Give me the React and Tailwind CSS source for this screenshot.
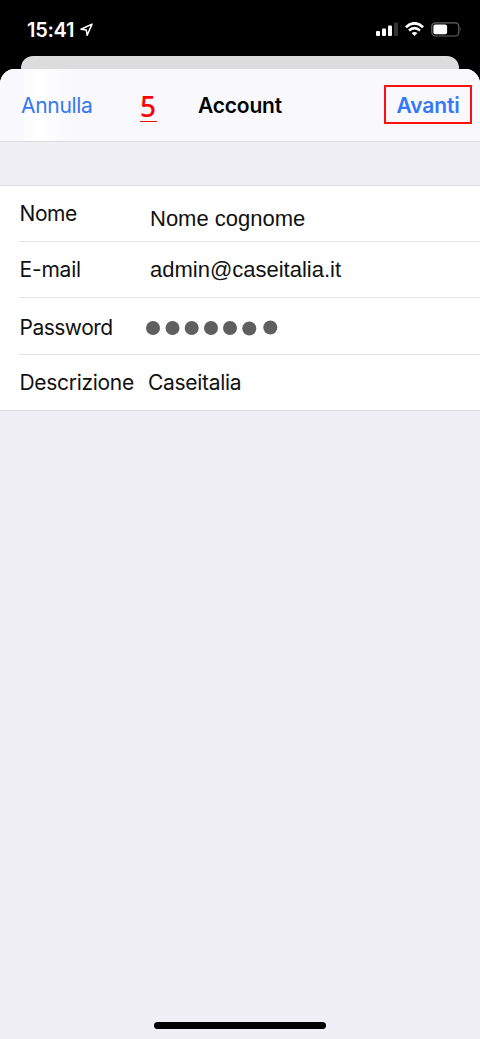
import React from "react";

const dots = [
  { x: 7, y: 8 },
  { x: 26.5, y: 8 },
  { x: 45.7, y: 8 },
  { x: 65, y: 8 },
  { x: 84, y: 8 },
  { x: 103.3, y: 8.5 },
  { x: 124.3, y: 7.5 },
];

function StatusBar() {
  return (
    <div className="flex h-14 items-start justify-between pl-[27px] pr-[18px] text-white">
      <div className="flex items-center pt-[15px]">
        <span className="w-[50px] text-[20px] font-semibold leading-[30px] tracking-[-0.3px] whitespace-nowrap">15:41</span>
        <svg className="ml-[2px] h-[15px] w-[15px]" viewBox="0 0 15 15" fill="none" stroke="currentColor" strokeWidth="1.5" strokeLinejoin="round">
          <path d="M13 1.1 L2 6.3 L7.3 7.1 L8.2 12.3 Z" />
        </svg>
      </div>
      <div className="flex items-start pt-[22px]">
        <svg className="h-[15px] w-[22px]" viewBox="0 0 22 15" fill="currentColor">
          <rect x="0" y="9" width="4" height="5" rx="1" />
          <rect x="6" y="6.5" width="4" height="7.5" rx="1" />
          <rect x="12" y="3.5" width="4" height="10.5" rx="1" />
          <rect x="18" y="0.5" width="4" height="13.5" rx="1" fill="#343434" />
        </svg>
        <svg className="ml-[7px] h-[15px] w-[19px]" viewBox="0 0 19 15" fill="none" stroke="currentColor">
          <path d="M0.9 5.2 Q9.5 -2.6 18.1 5.2" strokeWidth="2.7" />
          <path d="M4 8.5 Q9.5 3.7 15 8.5" strokeWidth="2.5" />
          <path d="M9.5 14 L6.6 11.1 Q9.5 8.7 12.4 11.1 Z" fill="currentColor" stroke="none" />
        </svg>
        <svg className="ml-[7px] h-[15px] w-[31px]" viewBox="0 0 31 15">
          <rect x="0.8" y="0.8" width="27" height="13.2" rx="3.6" fill="none" stroke="#666" strokeWidth="1.2" />
          <rect x="2.4" y="2.6" width="13.7" height="9.6" rx="2" fill="#fff" />
          <path d="M29.2 5.2 Q31 7.4 29.2 9.6 Z" fill="#666" />
        </svg>
      </div>
    </div>
  );
}

function NavBar() {
  return (
    <div className="grid h-[73px] grid-cols-[120px_56px_128px_1fr] items-start rounded-t-[15px] border-b border-[#dcdce0] bg-[#f8f8fd] bg-linear-to-r from-[#f8f8fd] from-3% via-white via-8% to-[#f8f8fd] to-16% pt-[15px]">
      <button className="pl-[21px] pt-[7px] text-left text-[21px] leading-[30px] tracking-[-0.3px] text-[#3478f6]">Annulla</button>
      <div className="pt-[6px] text-center font-['Noto_Sans',sans-serif] text-[28px] leading-[32px] font-medium text-[#ff0000]">
        <span className="inline-block h-[32px] w-[17px] border-b border-[#ff0000]">5</span>
      </div>
      <h1 className="pt-[7px] text-center text-[21px] leading-[30px] font-semibold tracking-[-0.2px] text-black">Account</h1>
      <div className="flex justify-end pr-2 pt-[1px]">
        <button className="flex h-[39px] w-[88px] items-start justify-center border-2 border-[#ff1010] pt-[4px] text-[21px] leading-[30px] font-semibold tracking-[-0.1px] text-[#3478f6]">Avanti</button>
      </div>
    </div>
  );
}

function Row({ label, labelClass, rowClass, children }) {
  return (
    <div className="pl-[19px]">
      <div className={`flex items-start ${rowClass}`}>
        <span className={`shrink-0 text-[21px] leading-[30px] whitespace-nowrap ${labelClass}`}>{label}</span>
        {children}
      </div>
    </div>
  );
}

export default function App() {
  return (
    <div className="flex h-[1039px] w-[480px] flex-col overflow-hidden bg-black font-[Inter,sans-serif] text-[#111]">
      <StatusBar />
      <div className="mx-[21px] h-[13px] rounded-t-[12px] bg-[#dcdcdc]" />
      <div className="flex flex-1 flex-col rounded-t-[15px] bg-[#efeff5]">
        <NavBar />
        <div className="mt-[43px] border-y border-[#dcdce0] bg-white">
          <Row label="Nome" labelClass="w-[131px] pt-[13px] pl-[0.5px] tracking-[-0.4px]" rowClass="h-14 border-b border-[#e2e2e4]">
            <span className="pt-[18px] font-['Liberation_Sans',sans-serif] text-[22px] leading-[30px] whitespace-nowrap">Nome cognome</span>
          </Row>
          <Row label="E-mail" labelClass="w-[131px] pt-[13px] pl-[0.5px] tracking-[-0.2px]" rowClass="h-14 border-b border-[#e2e2e4]">
            <span className="pt-[13px] font-['Liberation_Sans',sans-serif] text-[22px] leading-[30px] whitespace-nowrap">admin@caseitalia.it</span>
          </Row>
          <Row label="Password" labelClass="w-[127px] pt-[15px] pl-[0.5px] tracking-[-0.5px]" rowClass="h-[57px] border-b border-[#e2e2e4]">
            <svg className="mt-[22px] h-4 w-[132px]" viewBox="0 0 132 16" fill="#5f5f5f">
              {dots.map((dot) => (
                <circle key={dot.x} cx={dot.x} cy={dot.y} r="7" />
              ))}
            </svg>
          </Row>
          <Row label="Descrizione" labelClass="w-[129px] pt-[13px] pl-[0.5px] tracking-[-0.3px]" rowClass="h-[55px]">
            <span className="pt-[13px] text-[21px] leading-[30px] tracking-[-0.3px] whitespace-nowrap">Caseitalia</span>
          </Row>
        </div>
        <div className="mx-auto mt-auto mb-[10px] h-[7px] w-[172px] rounded-full bg-black" />
      </div>
    </div>
  );
}
